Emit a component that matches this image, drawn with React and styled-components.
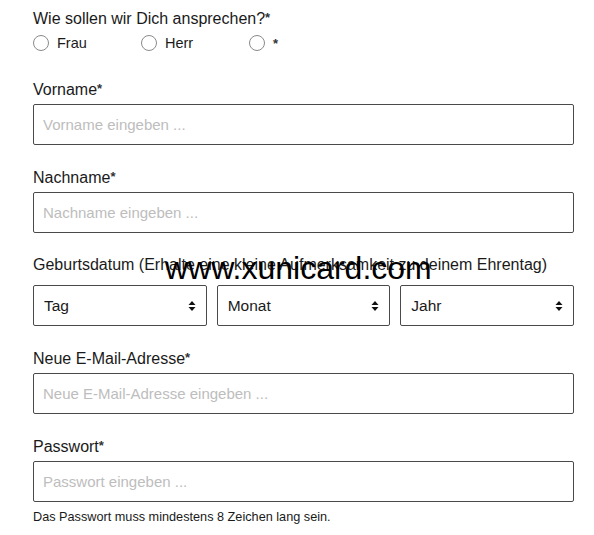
import styled, { createGlobalStyle } from "styled-components";

const GlobalStyle = createGlobalStyle`
  body {
    margin: 0;
    background: #fff;
    font-family: "Liberation Sans", Arial, sans-serif;
    color: #1a1a1a;
  }
`;

const salutations = ["Frau", "Herr", "*"];

const fields = [
  { label: "Vorname", placeholder: "Vorname eingeben ...", space: 25 },
  { label: "Nachname", placeholder: "Nachname eingeben ...", space: 22 },
];

const SortIcon = () => (
  <svg width="8" height="12" viewBox="0 0 8 12">
    <path d="M4 1 L7.5 5 H0.5 Z" fill="#111" />
    <path d="M4 11 L7.5 7 H0.5 Z" fill="#111" />
  </svg>
);

const App = () => {
  return (
    <Wrapper>
      <GlobalStyle />
      <Form>
        <Group>
          <Label $tight>
            Wie sollen wir Dich ansprechen?<Star>*</Star>
          </Label>
          <RadioRow>
            {salutations.map((s) => (
              <RadioItem key={s}>
                <Circle />
                {s === "*" ? <Star>*</Star> : <span>{s}</span>}
              </RadioItem>
            ))}
          </RadioRow>
        </Group>

        {fields.map((f) => (
          <Field key={f.label} $space={f.space}>
            <Label>
              {f.label}
              <Star>*</Star>
            </Label>
            <Input placeholder={f.placeholder} />
          </Field>
        ))}

        <Field $space={22}>
          <Label>Geburtsdatum (Erhalte eine kleine Aufmerksamkeit zu deinem Ehrentag)</Label>
          <SelectRow>
            {["Tag", "Monat", "Jahr"].map((s) => (
              <Select key={s}>
                <span>{s}</span>
                <SortIcon />
              </Select>
            ))}
          </SelectRow>
          <Watermark>www.xunicard.com</Watermark>
        </Field>

        <Field $space={22}>
          <Label>
            Neue E-Mail-Adresse<Star>*</Star>
          </Label>
          <Input placeholder="Neue E-Mail-Adresse eingeben ..." />
        </Field>

        <Field $space={22}>
          <Label>
            Passwort<Star>*</Star>
          </Label>
          <Input placeholder="Passwort eingeben ..." type="password" />
          <Hint>Das Passwort muss mindestens 8 Zeichen lang sein.</Hint>
        </Field>
      </Form>
    </Wrapper>
  );
};

const Wrapper = styled.div`
  padding: 8px 20px 0 33px;
`;

const Form = styled.div`
  width: 541px;
  display: flex;
  flex-direction: column;
`;

const Group = styled.div`
  display: flex;
  flex-direction: column;
`;

const Field = styled.div`
  position: relative;
  display: flex;
  flex-direction: column;
  margin-top: ${(p) => p.$space}px;
`;

const Label = styled.div`
  font-size: 16px;
  line-height: 20px;
  height: 20px;
  color: #1a1a1a;
  margin-bottom: ${(p) => (p.$tight ? 4 : 5)}px;
`;

const Star = styled.span`
  font-size: 13px;
  font-weight: bold;
  color: #333;
  vertical-align: 2px;
`;

const RadioRow = styled.div`
  display: flex;
  align-items: center;
  height: 22px;
`;

const RadioItem = styled.label`
  display: flex;
  align-items: center;
  gap: 8px;
  width: 108px;
  font-size: 14.5px;
  color: #1a1a1a;
`;

const Circle = styled.span`
  box-sizing: border-box;
  width: 16px;
  height: 16px;
  border: 1px solid #8a8a8a;
  border-radius: 50%;
  background: #fff;
`;

const Input = styled.input`
  box-sizing: border-box;
  width: 100%;
  height: 41px;
  border: 1px solid #4a4a4a;
  border-radius: 2px;
  padding: 0 9px;
  font-family: inherit;
  font-size: 15px;
  color: #1a1a1a;
  outline: none;

  &::placeholder {
    color: #bdbdbd;
  }
`;

const SelectRow = styled.div`
  display: grid;
  grid-template-columns: repeat(3, 1fr);
  gap: 10px;
  margin-top: 5px;
`;

const Select = styled.div`
  box-sizing: border-box;
  height: 41px;
  border: 1px solid #4a4a4a;
  border-radius: 2px;
  padding: 0 10px;
  display: flex;
  align-items: center;
  justify-content: space-between;
  font-size: 15.5px;
  color: #1a1a1a;
`;

const Hint = styled.div`
  margin-top: 8px;
  font-size: 12.7px;
  color: #1a1a1a;
`;

const Watermark = styled.div`
  position: absolute;
  left: 132px;
  top: -3px;
  font-family: "Liberation Sans", Arial, sans-serif;
  font-size: 32px;
  line-height: 32px;
  color: #000;
  pointer-events: none;
`;

export default App;
